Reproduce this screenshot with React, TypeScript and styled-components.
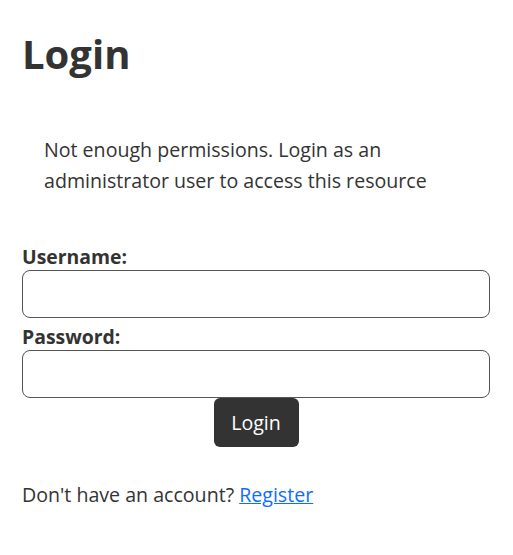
import React from "react";
import styled, { createGlobalStyle } from "styled-components";

const Global = createGlobalStyle`
  html, body { margin: 0; padding: 0; background: #fff; }
  body { font-family: "Open Sans", "Noto Sans", sans-serif; color: #333; }
  * { box-sizing: border-box; }
`;

const Page = styled.main`
  padding: 22px 23px 22px 22px;
  display: flex;
  flex-direction: column;
`;

const Title = styled.h1`
  margin: 8px 0 0;
  font-size: 40px;
  line-height: 48px;
  font-weight: 700;
  color: #333;
`;

const Notice = styled.p`
  margin: 56px 0 0;
  padding: 0 22px;
  font-size: 19.6px;
  line-height: 31px;
`;

const Form = styled.form`
  display: flex;
  flex-direction: column;
  margin-top: 48px;
`;

const Label = styled.label`
  font-size: 19.4px;
  font-weight: 700;
  line-height: 26px;
`;

const Input = styled.input`
  height: 48px;
  width: 100%;
  border: 1px solid #555;
  border-radius: 8px;
  padding: 0 12px;
  font: inherit;
  margin-bottom: 6px;
`;

const Button = styled.button`
  align-self: center;
  margin-top: -6px;
  width: 85px;
  height: 49px;
  background: #333;
  color: #fff;
  border: none;
  border-radius: 6px;
  font-family: inherit;
  font-size: 19.6px;
`;

const Footer = styled.p`
  margin: 35px 0 0;
  font-size: 19.6px;
  line-height: 26px;
`;

const Link = styled.a`
  color: #0d6efd;
  text-decoration: underline;
`;

export default function App() {
  return (
    <>
      <Global />
      <Page>
        <Title>Login</Title>
        <Notice>
          Not enough permissions. Login as an administrator user to access this resource
        </Notice>
        <Form onSubmit={(e) => e.preventDefault()}>
          <Label htmlFor="username">Username:</Label>
          <Input id="username" type="text" />
          <Label htmlFor="password">Password:</Label>
          <Input id="password" type="password" />
          <Button type="submit">Login</Button>
        </Form>
        <Footer>
          Don't have an account? <Link href="#">Register</Link>
        </Footer>
      </Page>
    </>
  );
}
